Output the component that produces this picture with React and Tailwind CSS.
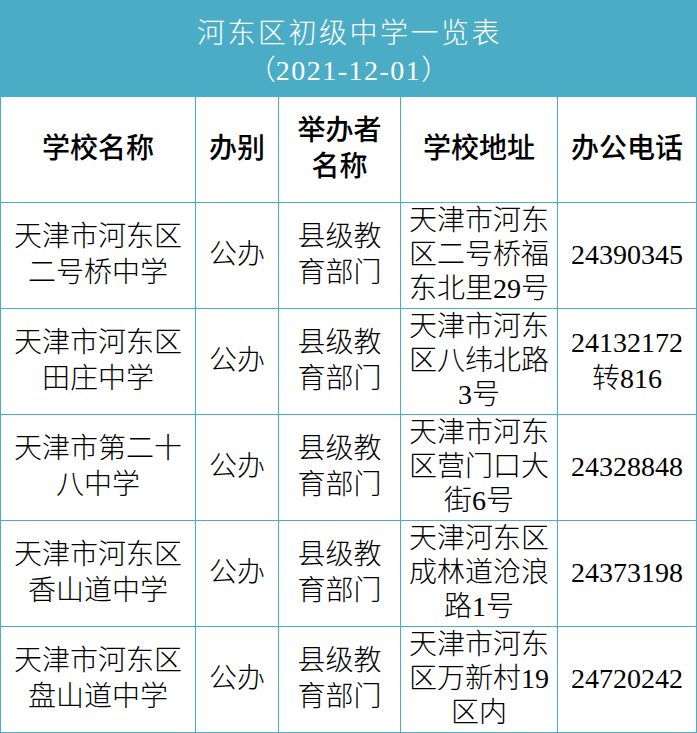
const rows = [
  {
    name: ["天津市河东区", "二号桥中学"],
    addr: ["天津市河东", "区二号桥福", "东北里29号"],
    phone: ["24390345"],
  },
  {
    name: ["天津市河东区", "田庄中学"],
    addr: ["天津市河东", "区八纬北路", "3号"],
    phone: ["24132172", "转816"],
  },
  {
    name: ["天津市第二十", "八中学"],
    addr: ["天津市河东", "区营门口大", "街6号"],
    phone: ["24328848"],
  },
  {
    name: ["天津市河东区", "香山道中学"],
    addr: ["天津河东区", "成林道沧浪", "路1号"],
    phone: ["24373198"],
  },
  {
    name: ["天津市河东区", "盘山道中学"],
    addr: ["天津市河东", "区万新村19", "区内"],
    phone: ["24720242"],
  },
];

const Lines = ({ lines }) => (
  <>
    {lines.map((l, i) => (
      <div key={i}>{l}</div>
    ))}
  </>
);

export default function App() {
  return (
    <div
      className="w-[697px] h-[733px] bg-white text-black overflow-hidden"
      style={{ fontFamily: '"Liberation Serif", "Noto Sans CJK SC", serif' }}
    >
      {/* Title band */}
      <div className="h-[97px] bg-[#4bacc6] text-white text-center text-[28px] leading-[37px] pt-[15px] font-light">
        <div className="tracking-[2.5px] pl-[2px]">河东区初级中学一览表</div>
        <div>
          （<span className="tracking-[1.5px]">2021-12-01</span>）
        </div>
      </div>

      {/* Table */}
      <table className="w-[696px] table-fixed border-collapse text-[28px] leading-[36px] text-center font-light">
        <colgroup>
          <col className="w-[195px]" />
          <col className="w-[83px]" />
          <col className="w-[122px]" />
          <col className="w-[157px]" />
          <col className="w-[139px]" />
        </colgroup>
        <thead>
          <tr className="h-[105px]">
            <th className="border border-t-0 border-[#4bacc6] font-medium p-0">学校名称</th>
            <th className="border border-t-0 border-[#4bacc6] font-medium p-0">办别</th>
            <th className="border border-t-0 border-[#4bacc6] font-medium p-0">
              <div>举办者</div>
              <div>名称</div>
            </th>
            <th className="border border-t-0 border-[#4bacc6] font-medium p-0">学校地址</th>
            <th className="border border-t-0 border-[#4bacc6] font-medium p-0">办公电话</th>
          </tr>
        </thead>
        <tbody>
          {rows.map((r, i) => (
            <tr key={i} className="h-[106px]">
              <td className="border border-[#4bacc6] p-0">
                <Lines lines={r.name} />
              </td>
              <td className="border border-[#4bacc6] p-0">公办</td>
              <td className="border border-[#4bacc6] p-0">
                <div>县级教</div>
                <div>育部门</div>
              </td>
              <td className="border border-[#4bacc6] p-0 whitespace-nowrap leading-[34px]">
                <Lines lines={r.addr} />
              </td>
              <td className="border border-[#4bacc6] p-0">
                <Lines lines={r.phone} />
              </td>
            </tr>
          ))}
        </tbody>
      </table>
    </div>
  );
}
